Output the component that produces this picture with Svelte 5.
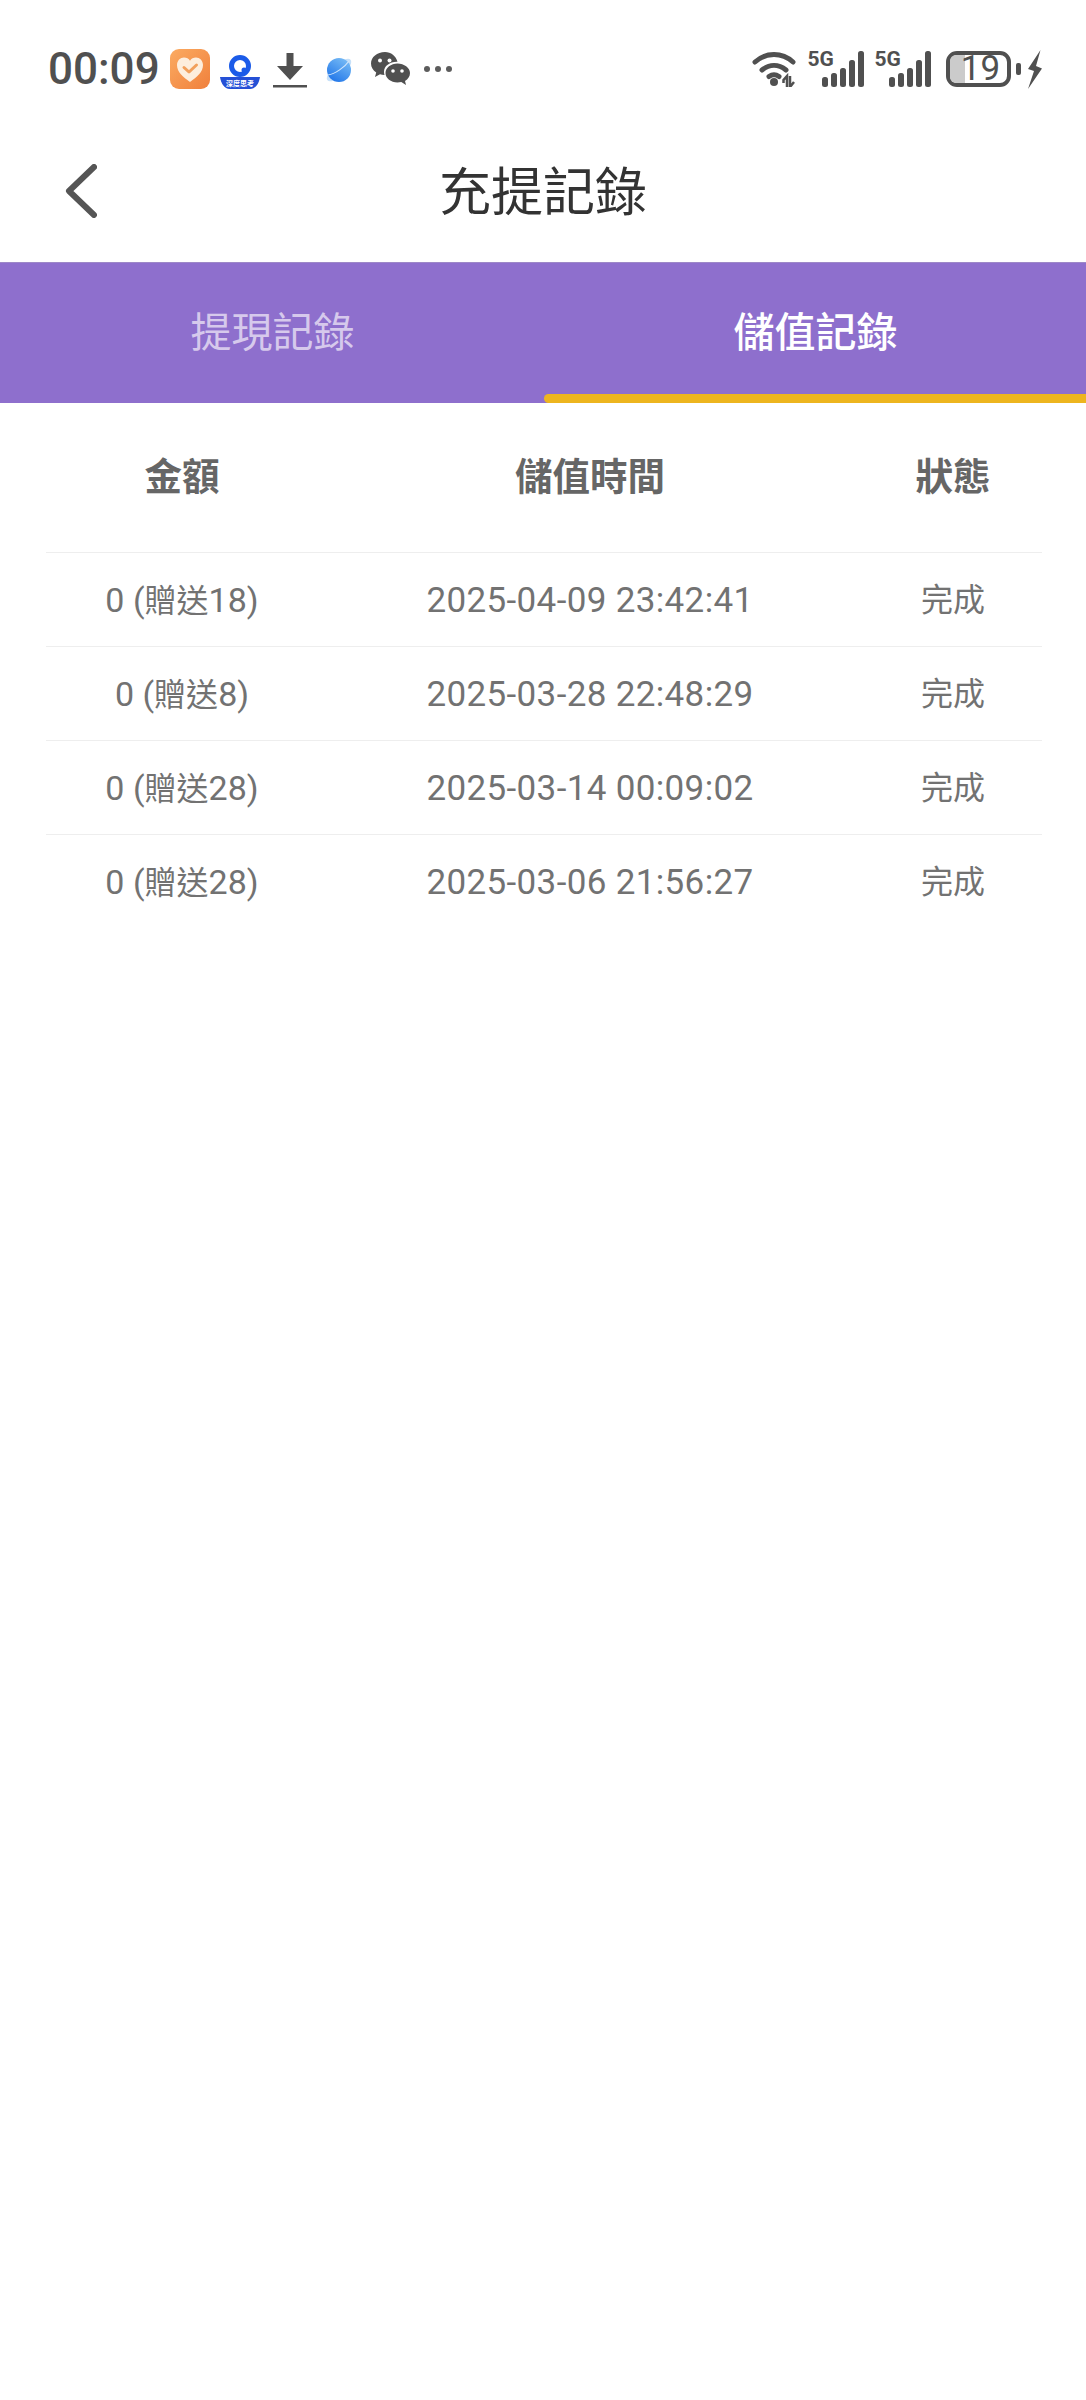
<script>
	const rows = [
		{ gift: 18, time: '2025-04-09 23:42:41', status: '完成' },
		{ gift: 8, time: '2025-03-28 22:48:29', status: '完成' },
		{ gift: 28, time: '2025-03-14 00:09:02', status: '完成' },
		{ gift: 28, time: '2025-03-06 21:56:27', status: '完成' }
	];
	const bars = [
		{ x: 0, h: 10 },
		{ x: 9, h: 14 },
		{ x: 18, h: 19 },
		{ x: 27, h: 27 },
		{ x: 36, h: 36 }
	];
</script>

<div class="page">
	<div class="status">
		<span class="clock">00:09</span>

		<svg class="ic health" viewBox="0 0 40 40" width="40" height="40">
			<defs>
				<linearGradient id="hg" x1="0" y1="0" x2="1" y2="1">
					<stop offset="0" stop-color="#fbab62" />
					<stop offset="1" stop-color="#f0803c" />
				</linearGradient>
			</defs>
			<rect width="40" height="40" rx="9" fill="url(#hg)" />
			<path d="M20 33C13 28 7 23 7 16c0-4.500 3.300-7.500 7-7.500 2.600 0 4.700 1.200 6 3.200 1.300-2 3.400-3.200 6-3.200 3.700 0 7 3 7 7.500 0 7-6 12-13 17z" fill="#fdeedd" />
			<path d="M14 18.500l5 4.500 7.500-7" fill="none" stroke="#f2a05c" stroke-width="3" stroke-linecap="round" stroke-linejoin="round" />
		</svg>

		<span class="deep">
			<svg class="ic" viewBox="0 0 40 34" width="40" height="34">
				<circle cx="20" cy="11" r="8.500" fill="none" stroke="#1b5be8" stroke-width="5" />
				<circle cx="24" cy="15" r="2.500" fill="#1b5be8" />
				<path d="M0 22h40c-1 6-4 12-10 12H10C4 34 1 28 0 22z" fill="#2550d6" />
			</svg>
			<span class="deep-text">深度思考</span>
		</span>

		<svg class="ic down" viewBox="0 0 34 36" width="34" height="36">
			<path d="M13.500 0h7v13h9.500L17 27 4 13h9.500z" fill="#505050" />
			<rect x="0" y="32" width="34" height="2.500" fill="#505050" />
		</svg>

		<svg class="ic planet" viewBox="0 0 32 32" width="32" height="32">
			<defs>
				<linearGradient id="pg" x1="0.800" y1="0" x2="0.200" y2="1">
					<stop offset="0" stop-color="#79bdf6" />
					<stop offset="1" stop-color="#1f74e8" />
				</linearGradient>
			</defs>
			<ellipse cx="16" cy="16" rx="15.500" ry="6" transform="rotate(-42 16 16)" fill="#c6e0f9" />
			<circle cx="16" cy="16" r="12" fill="url(#pg)" />
			<path d="M5 21C12 20 22 13 26 7" fill="none" stroke="#cfe5fb" stroke-width="1.200" />
		</svg>

		<svg class="ic chat" viewBox="0 0 40 36" width="40" height="36">
			<path d="M15 1C7 1 1 6.200 1 12.500c0 3.700 2 6.800 5.200 8.900L5 26l5-2.700c1.400.4 2.800.6 4.500.7-.4-1.200-.5-2.200-.5-3.300C14 15 20 10.500 27.500 10.800 26 5 21 1 15 1z" fill="#505050" />
			<circle cx="10" cy="9.500" r="2" fill="#fff" />
			<circle cx="19.500" cy="9.500" r="2" fill="#fff" />
			<path d="M27.500 12.500c-6.600 0-12 4.300-12 9.500s5.400 9.500 12 9.500c1.300 0 2.600-.2 3.800-.5L36 34l-1-4c3-1.800 5-4.700 5-8 0-5.200-5.900-9.500-12.500-9.500z" fill="#505050" />
			<circle cx="23" cy="20" r="1.800" fill="#fff" />
			<circle cx="32" cy="20" r="1.800" fill="#fff" />
		</svg>

		<span class="dots"><i></i><i></i><i></i></span>

		<span class="spacer"></span>

		<svg class="ic wifi" viewBox="0 0 46 36" width="46" height="36">
			<g fill="none" stroke="#505050" stroke-width="5" stroke-linecap="round">
				<path d="M3 11C14 1 30 1 41 11" />
				<path d="M10 19c7.500-6 16.500-6 24 0" />
				<path d="M17 25.500c3.500-2.500 6.500-2.500 10 0" />
			</g>
			<circle cx="22" cy="31" r="4" fill="#505050" />
			<path d="M35 36V25l-3.500 4v3M38 25v11l4-5" fill="none" stroke="#505050" stroke-width="2.500" />
		</svg>

		{#each [0, 1] as n (n)}
			<span class="signal">
				<span class="five-g">5G</span>
				<svg class="ic" viewBox="0 0 57 36" width="57" height="36">
					{#each bars as b (b.x)}
						<rect x={b.x + 14} y={36 - b.h} width="6" height={b.h} rx="2.500" fill="#505050" />
					{/each}
				</svg>
			</span>
		{/each}

		<span class="battery">
			<span class="level"></span>
			<span class="pct">19</span>
		</span>
		<span class="nub"></span>

		<svg class="ic bolt" viewBox="0 0 15 39" width="15" height="39">
			<path d="M13.500 0L1 19l6 2L1 39l14-20.500-6-2.500z" fill="#505050" />
		</svg>
	</div>

	<div class="nav">
		<svg class="back" viewBox="0 0 32 54" width="32" height="54">
			<path d="M29 3L4 27l25 24" fill="none" stroke="#555" stroke-width="6" stroke-linecap="round" stroke-linejoin="round" />
		</svg>
		<h1>充提記錄</h1>
	</div>

	<div class="tabs">
		<div class="tab">提現記錄</div>
		<div class="tab active">儲值記錄</div>
	</div>

	<div class="table">
		<div class="row head">
			<div>金額</div>
			<div>儲值時間</div>
			<div class="st">狀態</div>
		</div>
		{#each rows as r (r.time)}
			<div class="row">
				<div class="amount">0 (<span class="cjk">贈送</span>{r.gift})</div>
				<div class="time">{r.time}</div>
				<div class="cjk st">{r.status}</div>
			</div>
		{/each}
	</div>
</div>

<style>
	:global(body) {
		margin: 0;
		background: #fff;
	}

	.page {
		height: 2400px;
		background: #fff;
		font-family: Roboto, 'Noto Sans CJK TC', sans-serif;
		overflow: hidden;
	}

	.status {
		box-sizing: border-box;
		height: 130px;
		padding: 8px 44px 0 48px;
		display: flex;
		align-items: center;
		color: #505050;
	}

	.ic {
		display: block;
		flex: none;
	}

	.clock {
		font-size: 44px;
		font-weight: 500;
		line-height: 1;
		width: 122px;
	}

	.deep {
		position: relative;
		width: 40px;
		height: 34px;
		margin-left: 10px;
		margin-top: 6px;
	}

	.deep-text {
		position: absolute;
		left: 0;
		right: 0;
		bottom: 2px;
		font-size: 7px;
		line-height: 8px;
		font-family: 'Noto Sans CJK SC', sans-serif;
		font-weight: 700;
		color: #fff;
		text-align: center;
	}

	.down { margin-left: 13px; margin-top: 4px; }
	.planet { margin-left: 16px; margin-top: 2px; }
	.chat { margin-left: 15px; }

	.dots {
		display: flex;
		gap: 5px;
		margin-left: 14px;
	}

	.dots i {
		width: 6px;
		height: 6px;
		border-radius: 50%;
		background: #5c5c5c;
	}

	.spacer {
		flex: 1;
	}

	.signal {
		position: relative;
		width: 57px;
		height: 36px;
		margin-left: 9.500px;
	}

	.signal + .signal {
		margin-left: 10px;
	}

	.five-g {
		position: absolute;
		left: 0;
		top: -2px;
		font-size: 21px;
		line-height: 21px;
		font-weight: 700;
		color: #505050;
	}

	.battery {
		position: relative;
		box-sizing: border-box;
		width: 65px;
		height: 36px;
		margin-left: 14.500px;
		border: 4px solid #505050;
		border-radius: 11px;
		display: flex;
		align-items: center;
		justify-content: center;
	}

	.level {
		position: absolute;
		left: 0;
		top: 0;
		bottom: 0;
		width: 15px;
		background: #cbcbcb;
		border-radius: 6px 0 0 6px;
	}

	.pct {
		position: relative;
		left: 2px;
		font-size: 35px;
		line-height: 28px;
		color: #505050;
	}

	.nub {
		width: 5px;
		height: 12px;
		margin-left: 5px;
		border-radius: 2px;
		background: #505050;
	}

	.bolt {
		margin-left: 6px;
	}

	.nav {
		position: relative;
		height: 132px;
		display: flex;
		align-items: center;
		justify-content: center;
	}

	.back {
		position: absolute;
		left: 65px;
		top: 34px;
	}

	h1 {
		margin: 0 0 4px;
		font-size: 52px;
		font-weight: 400;
		line-height: 1;
		color: #333;
	}

	.tabs {
		box-sizing: border-box;
		height: 141px;
		display: grid;
		grid-template-columns: 545px 1fr;
		background: #8e6fcd;
		border-top: 1px solid #9d88c8;
	}

	.tab {
		position: relative;
		display: flex;
		align-items: center;
		justify-content: center;
		font-size: 41px;
		line-height: 1;
		color: #d6c9ec;
	}

	.active {
		color: #fff;
		font-weight: 500;
	}

	.active::after {
		content: '';
		position: absolute;
		left: -1px;
		right: 0;
		bottom: 0;
		height: 9px;
		background: #edb51f;
		border-radius: 5px 0 0 5px;
	}

	.table {
		margin: 0 44px 0 46px;
	}

	.row {
		display: grid;
		grid-template-columns: 272px 544px 1fr;
		align-items: center;
		height: 94px;
		padding-top: 1px;
		border-top: 1px solid #eee;
		box-sizing: border-box;
		text-align: center;
		font-size: 35px;
		line-height: 1;
		color: #727272;
	}

	.amount {
		font-size: 34px;
	}

	.cjk {
		font-size: 32px;
	}

	.st {
		padding-left: 2px;
	}

	.time {
		letter-spacing: 0.35px;
	}

	.head {
		height: 149px;
		padding: 0;
		border-top: 0;
		font-size: 37.500px;
		font-weight: 700;
		color: #666;
	}
</style>
